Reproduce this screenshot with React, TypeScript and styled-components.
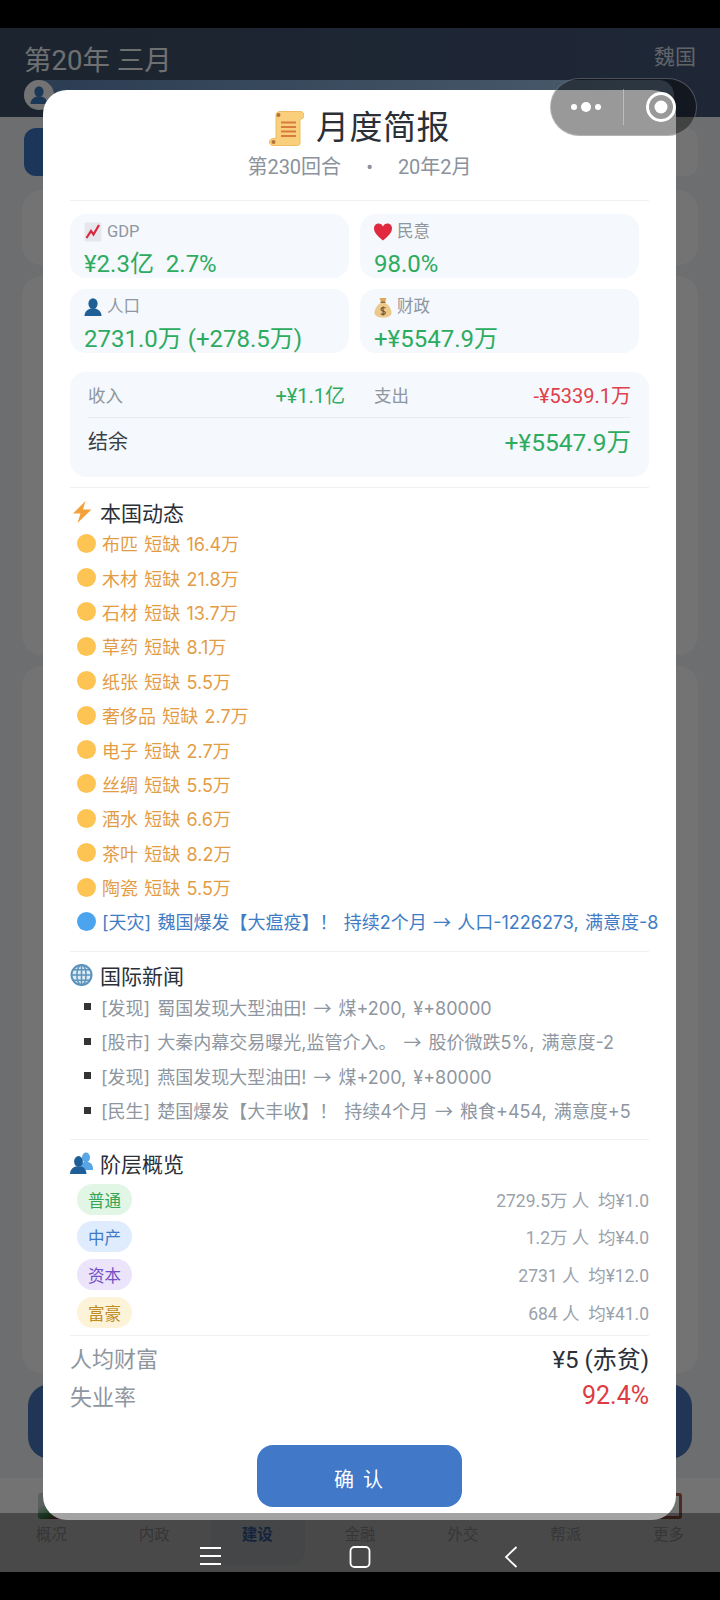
import styled, { createGlobalStyle } from 'styled-components'

const GlobalStyle = createGlobalStyle`
  html, body {
    margin: 0;
    padding: 0;
    background: #000;
    font-family: Roboto, "Noto Sans CJK SC", sans-serif;
  }
`

const stats = [
  { icon: 'chart', label: 'GDP', value: '¥2.3亿  2.7%' },
  { icon: 'heart', label: '民意', value: '98.0%' },
  { icon: 'person', label: '人口', value: '2731.0万 (+278.5万)' },
  { icon: 'bag', label: '财政', value: '+¥5547.9万' }
]

const shortages = [
  '布匹 短缺 16.4万',
  '木材 短缺 21.8万',
  '石材 短缺 13.7万',
  '草药 短缺 8.1万',
  '纸张 短缺 5.5万',
  '奢侈品 短缺 2.7万',
  '电子 短缺 2.7万',
  '丝绸 短缺 5.5万',
  '酒水 短缺 6.6万',
  '茶叶 短缺 8.2万',
  '陶瓷 短缺 5.5万'
]

const news = [
  ['[发现] 蜀国发现大型油田! ', ' 煤+200, ¥+80000'],
  ['[股市] 大秦内幕交易曝光,监管介入。 ', ' 股价微跌5%, 满意度-2'],
  ['[发现] 燕国发现大型油田! ', ' 煤+200, ¥+80000'],
  ['[民生] 楚国爆发【大丰收】！ 持续4个月 ', ' 粮食+454, 满意度+5']
]

const classes = [
  { name: '普通', info: '2729.5万 人  均¥1.0', bg: '#e2f6e6', fg: '#35a457' },
  { name: '中产', info: '1.2万 人  均¥4.0', bg: '#dfecfd', fg: '#3f79c4' },
  { name: '资本', info: '2731 人  均¥12.0', bg: '#ece4fb', fg: '#7350c4' },
  { name: '富豪', info: '684 人  均¥41.0', bg: '#fdf3d8', fg: '#c08a1e' }
]

const tabs = ['概况', '内政', '建设', '金融', '外交', '帮派', '更多']

function ChartIcon() {
  return (
    <svg width="18" height="20" viewBox="0 0 18 20">
      <rect x="0.5" y="0.5" width="17" height="19" rx="1.5" fill="#e6e7ec" />
      <path d="M2.5 16 L7 9 L9.5 12.5 L15 3" fill="none" stroke="#d9283c" strokeWidth="2.2" />
    </svg>
  )
}

function HeartIcon() {
  return (
    <svg width="18" height="18" viewBox="0 0 18 18">
      <path d="M9 17.5 C4 13 0 9.8 0 5.2 C0 2.2 2.2 .5 4.6 .5 C6.5 .5 8.2 1.6 9 3.4 C9.8 1.6 11.5 .5 13.4 .5 C15.8 .5 18 2.2 18 5.2 C18 9.8 14 13 9 17.5 Z" fill="#e0293f" />
    </svg>
  )
}

function PersonIcon({ color = '#1f5f97' }: { color?: string }) {
  return (
    <svg width="18" height="18" viewBox="0 0 18 18">
      <ellipse cx="9" cy="5.6" rx="4.6" ry="5.4" fill={color} />
      <path d="M0.5 18 C0.5 13.5 3.5 11.4 6.5 10.4 L11.5 10.4 C14.5 11.4 17.5 13.5 17.5 18 Z" fill={color} />
    </svg>
  )
}

function BagIcon() {
  return (
    <svg width="18" height="21" viewBox="0 0 18 21">
      <path d="M5.5 1 L12.5 1 L11 5 L7 5 Z" fill="#dca85a" />
      <path d="M7 5.5 L11 5.5 C15 8.5 17.5 12 17.5 15.5 C17.5 19 14.5 20.5 9 20.5 C3.5 20.5 .5 19 .5 15.5 C.5 12 3 8.5 7 5.5 Z" fill="#edc888" />
      <rect x="6.6" y="4.6" width="4.8" height="1.4" fill="#8a6a3a" />
      <path d="M11.4 11.2 C10.4 10.2 7 10.2 7 12.4 C7 14.6 11.4 13.6 11.4 15.8 C11.4 17.8 8 17.8 6.8 16.6 M9.1 9.4 L9.1 18.6" fill="none" stroke="#6b5230" strokeWidth="1.1" />
    </svg>
  )
}

function ScrollIcon() {
  return (
    <svg width="35" height="35" viewBox="0 0 35 35">
      <path d="M7 4 C7 1.5 9 .5 11 .5 L31 .5 C33.5 .5 35 2 35 4.5 C35 6.5 33.5 8 31.5 8 L31 8 L31 32 C31 33.6 30 34.5 28.5 34.5 L4.5 34.5 C2 34.5 .5 33 .5 31 C.5 29 2 27.5 4.5 27.5 L7 27.5 Z" fill="#f9cf7c" stroke="#eebb62" strokeWidth="1" />
      <circle cx="9.5" cy="4" r="2" fill="#b5713c" />
      <circle cx="4.5" cy="31" r="2" fill="#b5713c" />
      <path d="M12 11.5 H27 M12 16 H27 M12 20.5 H27 M12 25 H27" stroke="#d97b3e" strokeWidth="2" />
    </svg>
  )
}

function BoltIcon() {
  return (
    <svg width="20" height="22" viewBox="0 0 20 22">
      <path d="M13.5 0 L1 12.5 L8.5 12.5 L5.5 22 L19.5 8.5 L11 8.5 Z" fill="#f3a23a" />
    </svg>
  )
}

function GlobeIcon() {
  return (
    <svg width="23" height="22" viewBox="0 0 23 22">
      <circle cx="11.5" cy="11" r="10" fill="#dcebf5" stroke="#5b93bd" strokeWidth="2" />
      <ellipse cx="11.5" cy="11" rx="4.6" ry="10" fill="none" stroke="#5b93bd" strokeWidth="1.5" />
      <path d="M11.5 1 V21 M1.5 11 H21.5 M3 5.8 H20 M3 16.2 H20" stroke="#5b93bd" strokeWidth="1.5" />
    </svg>
  )
}

function PeopleIcon() {
  return (
    <svg width="23" height="22" viewBox="0 0 23 22">
      <ellipse cx="16" cy="5.5" rx="4" ry="5" fill="#58a6e6" />
      <path d="M10 18 C10 13 12 10.5 14 10 L18 10 C20.5 10.5 23 12.5 23 17 L23 18 Z" fill="#58a6e6" />
      <ellipse cx="8.5" cy="9.5" rx="4.4" ry="5.4" fill="#1f5f97" />
      <path d="M0 22 C0 18 2.5 15.5 5.5 14.4 L11.5 14.4 C14.5 15.5 16.5 18 16.5 22 Z" fill="#1f5f97" />
    </svg>
  )
}

const statIcons: Record<string, React.ReactNode> = {
  chart: <ChartIcon />,
  heart: <HeartIcon />,
  person: <PersonIcon />,
  bag: <BagIcon />
}

export default function App() {
  return (
    <S.Phone>
      <GlobalStyle />
      <S.StatusBar />
      <S.Screen>
        <S.Header>
          <S.HeaderRow>
            <S.HeaderTitle>第20年 三月</S.HeaderTitle>
            <S.Country>魏国</S.Country>
          </S.HeaderRow>
          <S.HeaderPill>
            <S.Avatar>
              <PersonIcon color="#3f7cc0" />
            </S.Avatar>
          </S.HeaderPill>
        </S.Header>
        <S.Body>
          <S.SubTabs>
            <S.SubTab $active />
            <S.SubTab $active={false} />
          </S.SubTabs>
          <S.BackCard $h={75} />
          <S.BackCard $h={379} />
          <S.BackCard $h={707} />
          <S.BigButton />
        </S.Body>
        <S.TabBar>
          {tabs.map((t, i) => (
            <S.Tab key={t} $active={i === 2}>
              {(i === 0 || i === 6) && <S.TabIcon $first={i === 0} />}
              <S.TabLabel $active={i === 2}>{t}</S.TabLabel>
            </S.Tab>
          ))}
        </S.TabBar>
        <S.Dim />
        <S.Modal>
          <S.TitleRow>
            <ScrollIcon />
            <S.Title>月度简报</S.Title>
          </S.TitleRow>
          <S.Subtitle>
            <span>第230回合</span>
            <span>•</span>
            <span>20年2月</span>
          </S.Subtitle>
          <S.Divider $top={21} />
          <S.StatGrid>
            {stats.map((s) => (
              <S.StatCard key={s.label}>
                <S.StatLabel>
                  <S.StatIcon>{statIcons[s.icon]}</S.StatIcon>
                  {s.label}
                </S.StatLabel>
                <S.StatValue>{s.value}</S.StatValue>
              </S.StatCard>
            ))}
          </S.StatGrid>
          <S.Panel>
            <S.PanelTop>
              <S.PanelCell>
                <S.PanelLabel>收入</S.PanelLabel>
                <S.PanelAmount $color="#2dab5f">+¥1.1亿</S.PanelAmount>
              </S.PanelCell>
              <S.PanelCell>
                <S.PanelLabel>支出</S.PanelLabel>
                <S.PanelAmount $color="#e0404a">-¥5339.1万</S.PanelAmount>
              </S.PanelCell>
            </S.PanelTop>
            <S.PanelBottom>
              <S.BalanceLabel>结余</S.BalanceLabel>
              <S.BalanceValue>+¥5547.9万</S.BalanceValue>
            </S.PanelBottom>
          </S.Panel>
          <S.Divider $top={10} />
          <S.SectionTitle $top={8}>
            <S.SectionIcon>
              <BoltIcon />
            </S.SectionIcon>
            本国动态
          </S.SectionTitle>
          <S.EventList>
            {shortages.map((s) => (
              <S.EventRow key={s} $color="#e39c46">
                <S.Dot $color="#fdc353" />
                <span>{s}</span>
              </S.EventRow>
            ))}
            <S.EventRow $color="#3f7cc4">
              <S.Dot $color="#4da4ee" />
              <span>
                [天灾] 魏国爆发【大瘟疫】！ 持续2个月 <S.Arrow>→</S.Arrow> 人口-1226273, 满意度-8
              </span>
            </S.EventRow>
          </S.EventList>
          <S.Divider $top={12} />
          <S.SectionTitle $top={7}>
            <S.SectionIcon>
              <GlobeIcon />
            </S.SectionIcon>
            国际新闻
          </S.SectionTitle>
          <S.NewsList>
            {news.map((n, i) => (
              <S.NewsRow key={i}>
                <S.Bullet />
                <span>
                  {n[0]}
                  <S.Arrow>→</S.Arrow>
                  {n[1]}
                </span>
              </S.NewsRow>
            ))}
          </S.NewsList>
          <S.Divider $top={12} />
          <S.SectionTitle $top={7}>
            <S.SectionIcon>
              <PeopleIcon />
            </S.SectionIcon>
            阶层概览
          </S.SectionTitle>
          <S.ClassList>
            {classes.map((c) => (
              <S.ClassRow key={c.name}>
                <S.Badge $bg={c.bg} $fg={c.fg}>
                  {c.name}
                </S.Badge>
                <S.ClassInfo>{c.info}</S.ClassInfo>
              </S.ClassRow>
            ))}
          </S.ClassList>
          <S.Divider $top={4} />
          <S.SummaryList>
            <S.SummaryRow>
              <S.SummaryLabel>人均财富</S.SummaryLabel>
              <S.SummaryValue $size={24} $color="#2b3038">¥5 (赤贫)</S.SummaryValue>
            </S.SummaryRow>
            <S.SummaryRow>
              <S.SummaryLabel>失业率</S.SummaryLabel>
              <S.SummaryValue $size={25} $color="#dc3c42">92.4%</S.SummaryValue>
            </S.SummaryRow>
          </S.SummaryList>
          <S.ConfirmButton>确 认</S.ConfirmButton>
        </S.Modal>
        <S.Capsule>
          <svg width="32" height="12" viewBox="0 0 32 12">
            <circle cx="4" cy="6" r="3" fill="#fff" />
            <circle cx="16" cy="6" r="5" fill="#fff" />
            <circle cx="28" cy="6" r="3" fill="#fff" />
          </svg>
          <S.CapsuleLine />
          <svg width="32" height="32" viewBox="0 0 32 32">
            <circle cx="16" cy="16" r="13.5" fill="none" stroke="#fff" strokeWidth="3" />
            <circle cx="16" cy="16" r="6.5" fill="#fff" />
          </svg>
        </S.Capsule>
        <S.NavOverlay>
          <svg width="21" height="20" viewBox="0 0 21 20">
            <path d="M0 2 H21 M0 10 H21 M0 18 H21" stroke="#fff" strokeWidth="1.8" />
          </svg>
          <svg width="22" height="22" viewBox="0 0 22 22">
            <rect x="1.5" y="1" width="19" height="20" rx="4" fill="none" stroke="#fff" strokeWidth="1.8" />
          </svg>
          <svg width="14" height="22" viewBox="0 0 14 22">
            <path d="M12.5 1 L2 11 L12.5 21" fill="none" stroke="#fff" strokeWidth="1.8" />
          </svg>
        </S.NavOverlay>
      </S.Screen>
      <S.StatusBar />
    </S.Phone>
  )
}

const S = {
  Phone: styled.div`
    width: 720px;
    height: 1600px;
    background: #000;
    display: flex;
    flex-direction: column;
    overflow: hidden;
  `,
  StatusBar: styled.div`
    height: 28px;
    flex: none;
    background: #000;
    position: relative;
    z-index: 5;
  `,
  Screen: styled.div`
    flex: 1;
    position: relative;
    display: flex;
    flex-direction: column;
    background: #f2f3f5;
    min-height: 0;
  `,
  Header: styled.div`
    height: 89px;
    flex: none;
    box-sizing: border-box;
    padding: 15px 24px 0;
    background: linear-gradient(90deg, #3e5069, #45587a);
    display: flex;
    flex-direction: column;
  `,
  HeaderRow: styled.div`
    display: flex;
    justify-content: space-between;
    align-items: flex-start;
    height: 37px;
  `,
  HeaderTitle: styled.div`
    font-size: 27.5px;
    line-height: 36px;
    color: #f4f8fb;
  `,
  Country: styled.div`
    font-size: 21px;
    line-height: 28px;
    color: #d8dde4;
  `,
  HeaderPill: styled.div`
    height: 30px;
    margin-right: 22px;
    border-radius: 15px;
    background: linear-gradient(90deg, #5e86b5, #a8cdf2);
    display: flex;
    align-items: center;
  `,
  Avatar: styled.div`
    width: 30px;
    height: 30px;
    border-radius: 50%;
    background: #fff;
    display: flex;
    align-items: center;
    justify-content: center;
  `,
  Body: styled.div`
    flex: 1;
    min-height: 0;
    box-sizing: border-box;
    padding: 11px 22px 0;
    display: flex;
    flex-direction: column;
    gap: 11px;
  `,
  SubTabs: styled.div`
    height: 48px;
    flex: none;
    margin: 0 0 3px 2px;
    display: grid;
    grid-template-columns: 1fr 1fr;
    gap: 10px;
  `,
  SubTab: styled.div<{ $active: boolean }>`
    border-radius: 12px;
    background: ${(p) => (p.$active ? '#3f78c8' : '#fff')};
  `,
  BackCard: styled.div<{ $h: number }>`
    height: ${(p) => p.$h}px;
    flex: none;
    border-radius: 20px;
    background: #fff;
  `,
  BigButton: styled.div`
    height: 75px;
    flex: none;
    margin: 0 6px;
    border-radius: 22px;
    background: #4a78c0;
  `,
  TabBar: styled.div`
    height: 94px;
    flex: none;
    background: #fff;
    display: grid;
    grid-template-columns: repeat(7, 1fr);
  `,
  Tab: styled.div<{ $active: boolean }>`
    position: relative;
    display: flex;
    justify-content: center;
    box-sizing: border-box;
    margin: ${(p) => (p.$active ? '22px 4px 7px' : '0')};
    padding-top: ${(p) => (p.$active ? '23px' : '45px')};
    border-radius: 14px;
    background: ${(p) => (p.$active ? '#f1f4f8' : 'transparent')};
  `,
  TabIcon: styled.div<{ $first: boolean }>`
    position: absolute;
    top: 15px;
    left: 50%;
    width: 26px;
    height: 26px;
    margin-left: -13px;
    box-sizing: border-box;
    border-radius: 3px;
    background: ${(p) => (p.$first ? 'linear-gradient(150deg, #cdd4d4 35%, #3fa550 70%, #b02848 88%)' : 'transparent')};
    border: ${(p) => (p.$first ? 'none' : '3px solid #a8624a')};
  `,
  TabLabel: styled.div<{ $active: boolean }>`
    font-size: 15.5px;
    line-height: 24px;
    color: ${(p) => (p.$active ? '#4a7fd0' : '#bdbdbd')};
    font-weight: ${(p) => (p.$active ? 700 : 400)};
  `,
  Dim: styled.div`
    position: absolute;
    inset: 0;
    background: rgba(0, 0, 0, 0.55);
  `,
  Modal: styled.div`
    position: absolute;
    top: 62px;
    left: 43px;
    width: 633px;
    height: 1430px;
    box-sizing: border-box;
    padding: 0 27px;
    border-radius: 24px;
    background: #fff;
    display: flex;
    flex-direction: column;
  `,
  TitleRow: styled.div`
    display: flex;
    justify-content: center;
    align-items: center;
    gap: 12px;
    margin-top: 19px;
    height: 38px;
  `,
  Title: styled.div`
    font-size: 33px;
    line-height: 38px;
    color: #2b3038;
    letter-spacing: 0.5px;
  `,
  Subtitle: styled.div`
    margin-top: 8px;
    display: flex;
    justify-content: center;
    gap: 25px;
    font-size: 20px;
    line-height: 24px;
    color: #8a929c;
  `,
  Divider: styled.div<{ $top: number }>`
    height: 1px;
    flex: none;
    margin-top: ${(p) => p.$top}px;
    background: #eef0f3;
  `,
  StatGrid: styled.div`
    margin-top: 13px;
    width: 570px;
    display: grid;
    grid-template-columns: 279px 279px;
    gap: 11px;
  `,
  StatCard: styled.div`
    height: 64px;
    box-sizing: border-box;
    padding: 6px 14px 0;
    border-radius: 16px;
    background: #f5f8fc;
  `,
  StatLabel: styled.div`
    display: flex;
    align-items: center;
    gap: 5px;
    font-size: 16.5px;
    line-height: 24px;
    color: #8e96a0;
  `,
  StatIcon: styled.span`
    display: flex;
    align-items: center;
  `,
  StatValue: styled.div`
    margin-top: 6px;
    font-size: 24px;
    line-height: 28px;
    color: #2dab5f;
    white-space: pre;
  `,
  Panel: styled.div`
    margin-top: 19px;
    height: 105px;
    flex: none;
    box-sizing: border-box;
    padding: 0 18px;
    border-radius: 16px;
    background: #f5f8fc;
  `,
  PanelTop: styled.div`
    height: 45px;
    display: grid;
    grid-template-columns: 1fr 1fr;
    gap: 29px;
    border-bottom: 1px solid #e9edf2;
  `,
  PanelCell: styled.div`
    display: flex;
    justify-content: space-between;
    align-items: center;
  `,
  PanelLabel: styled.div`
    font-size: 17.5px;
    color: #8e96a0;
  `,
  PanelAmount: styled.div<{ $color: string }>`
    font-size: 20px;
    color: ${(p) => p.$color};
  `,
  PanelBottom: styled.div`
    height: 44px;
    display: flex;
    justify-content: space-between;
    align-items: center;
  `,
  BalanceLabel: styled.div`
    font-size: 20px;
    color: #3a4048;
  `,
  BalanceValue: styled.div`
    font-size: 24.5px;
    color: #2dab5f;
  `,
  SectionTitle: styled.div<{ $top: number }>`
    margin-top: ${(p) => p.$top}px;
    height: 32px;
    display: flex;
    align-items: center;
    gap: 7px;
    font-size: 21px;
    color: #2b3038;
  `,
  SectionIcon: styled.span`
    width: 23px;
    display: flex;
    justify-content: center;
  `,
  EventList: styled.div`
    margin-top: -2px;
    padding-left: 7px;
    display: flex;
    flex-direction: column;
  `,
  EventRow: styled.div<{ $color: string }>`
    height: 34.4px;
    display: flex;
    align-items: center;
    gap: 6px;
    font-family: Inter, "Noto Sans CJK SC", sans-serif;
    font-size: 18px;
    word-spacing: 1.2px;
    color: ${(p) => p.$color};
    white-space: pre;
  `,
  Dot: styled.span<{ $color: string }>`
    width: 19px;
    height: 19px;
    flex: none;
    border-radius: 50%;
    background: ${(p) => p.$color};
  `,
  Arrow: styled.span`
    font-family: "Noto Sans CJK SC", sans-serif;
  `,
  NewsList: styled.div`
    margin-top: -1px;
    padding-left: 14px;
    display: flex;
    flex-direction: column;
  `,
  NewsRow: styled.div`
    height: 34.4px;
    display: flex;
    align-items: center;
    gap: 10px;
    font-family: Inter, "Noto Sans CJK SC", sans-serif;
    font-size: 18px;
    word-spacing: 2px;
    color: #8e96a0;
    white-space: pre;
  `,
  Bullet: styled.span`
    width: 7px;
    height: 7px;
    flex: none;
    background: #333;
  `,
  ClassList: styled.div`
    margin-top: 1px;
    padding-left: 7px;
    display: flex;
    flex-direction: column;
  `,
  ClassRow: styled.div`
    height: 37.7px;
    display: flex;
    justify-content: space-between;
    align-items: center;
  `,
  Badge: styled.span<{ $bg: string; $fg: string }>`
    width: 55px;
    height: 31px;
    box-sizing: border-box;
    padding-top: 5px;
    border-radius: 16px;
    text-align: center;
    font-size: 16.5px;
    line-height: 26px;
    background: ${(p) => p.$bg};
    color: ${(p) => p.$fg};
  `,
  ClassInfo: styled.span`
    font-size: 17.5px;
    color: #9aa2ac;
    white-space: pre;
  `,
  SummaryList: styled.div`
    margin-top: 2px;
    display: flex;
    flex-direction: column;
  `,
  SummaryRow: styled.div`
    height: 38px;
    display: flex;
    justify-content: space-between;
    align-items: center;
  `,
  SummaryLabel: styled.div`
    font-size: 22px;
    color: #8e96a0;
  `,
  SummaryValue: styled.div<{ $size: number; $color: string }>`
    font-size: ${(p) => p.$size}px;
    color: ${(p) => p.$color};
  `,
  ConfirmButton: styled.div`
    align-self: center;
    margin-top: 31px;
    width: 205px;
    height: 62px;
    flex: none;
    border-radius: 16px;
    background: #4178c8;
    color: #fff;
    font-size: 20px;
    line-height: 70px;
    text-align: center;
    letter-spacing: 2px;
    white-space: pre;
  `,
  Capsule: styled.div`
    position: absolute;
    top: 50px;
    left: 550px;
    width: 147px;
    height: 58px;
    box-sizing: border-box;
    padding: 0 19px;
    border-radius: 29px;
    border: 1px solid rgba(255, 255, 255, 0.25);
    background: rgba(0, 0, 0, 0.4);
    display: flex;
    align-items: center;
    justify-content: space-between;
  `,
  CapsuleLine: styled.div`
    width: 1px;
    height: 36px;
    background: rgba(255, 255, 255, 0.35);
  `,
  NavOverlay: styled.div`
    position: absolute;
    left: 0;
    right: 0;
    bottom: 0;
    height: 59px;
    box-sizing: border-box;
    padding: 33px 0 0 200px;
    background: rgba(0, 0, 0, 0.36);
    display: grid;
    grid-template-columns: 149px 155px 14px;
    align-items: start;
  `
}
